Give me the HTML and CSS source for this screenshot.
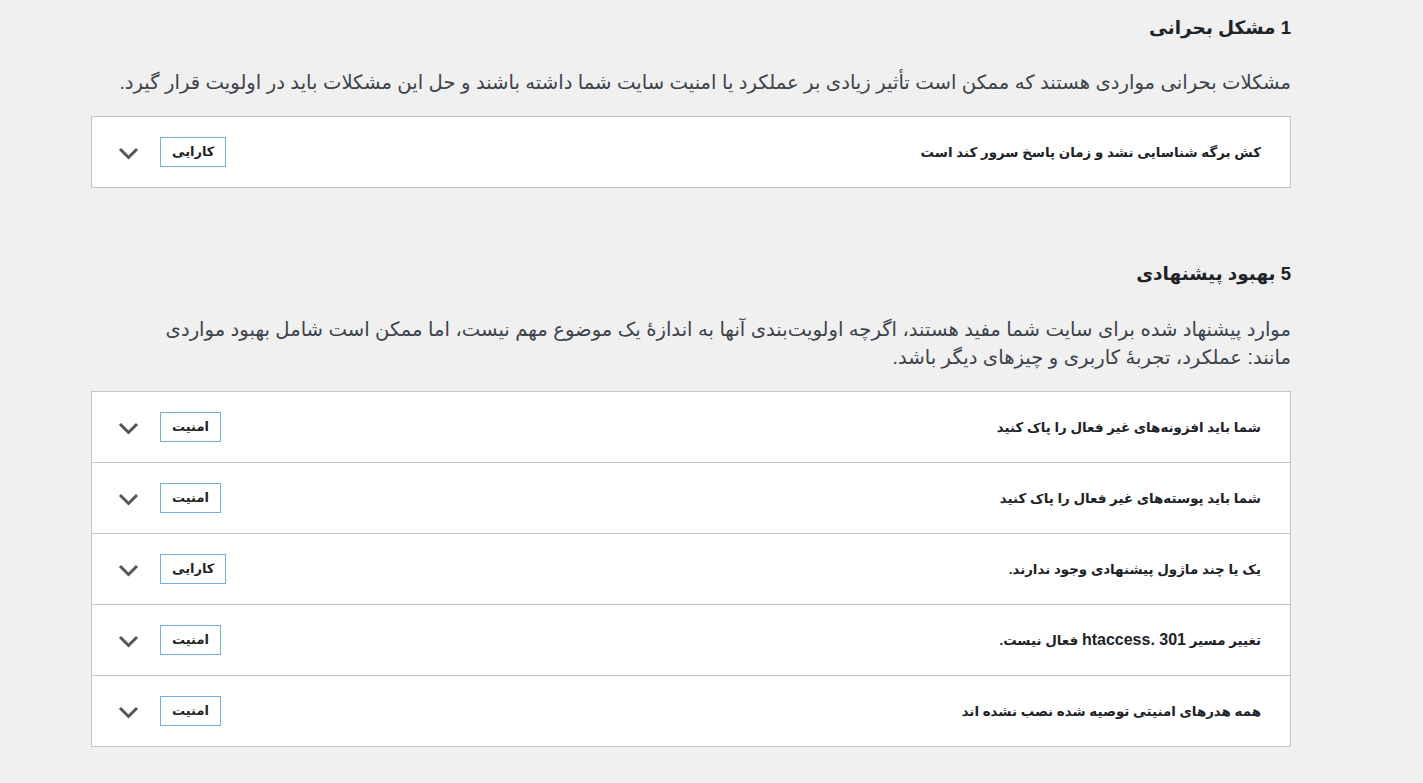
FILE: index.html
```html
<!DOCTYPE html>
<html lang="fa" dir="rtl">
<head>
<meta charset="utf-8">
<title>سلامت سایت</title>
<link rel="stylesheet" href="styles.css">
</head>
<body>
<div class="wrap">
  <section class="group">
    <h2 class="group-title">1 مشکل بحرانی</h2>
    <p class="group-desc">مشکلات بحرانی مواردی هستند که ممکن است تأثیر زیادی بر عملکرد یا امنیت سایت شما داشته باشند و حل این مشکلات باید در اولویت قرار گیرد.</p>
    <div class="accordion">
      <div class="row">
        <span class="title">کش برگه شناسایی نشد و زمان پاسخ سرور کند است</span>
        <span class="badge">کارایی</span>
        <svg class="chev" width="21" height="13" viewBox="0 0 21 13"><polyline points="2,2 10.5,10.5 19,2" fill="none" stroke="#50575e" stroke-width="3"/></svg>
      </div>
    </div>
  </section>

  <section class="group group-second">
    <h2 class="group-title">5 بهبود پیشنهادی</h2>
    <p class="group-desc">موارد پیشنهاد شده برای سایت شما مفید هستند، اگرچه اولویت‌بندی آنها به اندازهٔ یک موضوع مهم نیست، اما ممکن است شامل بهبود مواردی مانند: عملکرد، تجربهٔ کاربری و چیزهای دیگر باشد.</p>
    <div class="accordion">
      <div class="row">
        <span class="title">شما باید افزونه‌های غیر فعال را پاک کنید</span>
        <span class="badge">امنیت</span>
        <svg class="chev" width="21" height="13" viewBox="0 0 21 13"><polyline points="2,2 10.5,10.5 19,2" fill="none" stroke="#50575e" stroke-width="3"/></svg>
      </div>
      <div class="row">
        <span class="title">شما باید پوسته‌های غیر فعال را پاک کنید</span>
        <span class="badge">امنیت</span>
        <svg class="chev" width="21" height="13" viewBox="0 0 21 13"><polyline points="2,2 10.5,10.5 19,2" fill="none" stroke="#50575e" stroke-width="3"/></svg>
      </div>
      <div class="row">
        <span class="title">یک یا چند ماژول پیشنهادی وجود ندارند.</span>
        <span class="badge">کارایی</span>
        <svg class="chev" width="21" height="13" viewBox="0 0 21 13"><polyline points="2,2 10.5,10.5 19,2" fill="none" stroke="#50575e" stroke-width="3"/></svg>
      </div>
      <div class="row">
        <span class="title">تغییر مسیر <span class="latin">301 .htaccess</span> فعال نیست.</span>
        <span class="badge">امنیت</span>
        <svg class="chev" width="21" height="13" viewBox="0 0 21 13"><polyline points="2,2 10.5,10.5 19,2" fill="none" stroke="#50575e" stroke-width="3"/></svg>
      </div>
      <div class="row">
        <span class="title">همه هدرهای امنیتی توصیه شده نصب نشده اند</span>
        <span class="badge">امنیت</span>
        <svg class="chev" width="21" height="13" viewBox="0 0 21 13"><polyline points="2,2 10.5,10.5 19,2" fill="none" stroke="#50575e" stroke-width="3"/></svg>
      </div>
    </div>
  </section>
</div>
</body>
</html>
```

FILE: styles.css
```css
html, body {
  margin: 0;
  padding: 0;
  background: #f0f0f1;
}
body {
  font-family: "Liberation Sans", "DejaVu Sans", sans-serif;
  color: #1d2327;
}
.wrap {
  width: 1200px;
  margin-right: 132px;
  padding-top: 14px;
}
.group-title {
  margin: 0;
  font-size: 18.5px;
  line-height: 28px;
  font-weight: 700;
  color: #1d2327;
}
.group-desc {
  margin: 26px 0 20px;
  max-width: 1173px;
  font-size: 19.6px;
  line-height: 28px;
  color: #3c434a;
}
.group-second {
  margin-top: 72px;
}
.group-second .group-desc {
  margin-top: 27px;
}
.accordion {
  background: #fff;
  border: 1px solid #c3c4c7;
}
.row {
  height: 70px;
  display: flex;
  align-items: center;
  padding: 0 29px 0 26px;
  border-bottom: 1px solid #c3c4c7;
}
.row:last-child {
  border-bottom: 0;
}
.title {
  font-size: 13.4px;
  font-weight: 700;
  color: #1d2327;
}
.latin {
  font-size: 16px;
}
.badge {
  margin-right: auto;
  margin-left: 21px;
  height: 28px;
  line-height: 28px;
  padding: 0 11px;
  border: 1px solid #72aee6;
  font-size: 13px;
  font-weight: 700;
  color: #1d2327;
}
.chev {
  display: block;
  margin-top: 2px;
}
```
